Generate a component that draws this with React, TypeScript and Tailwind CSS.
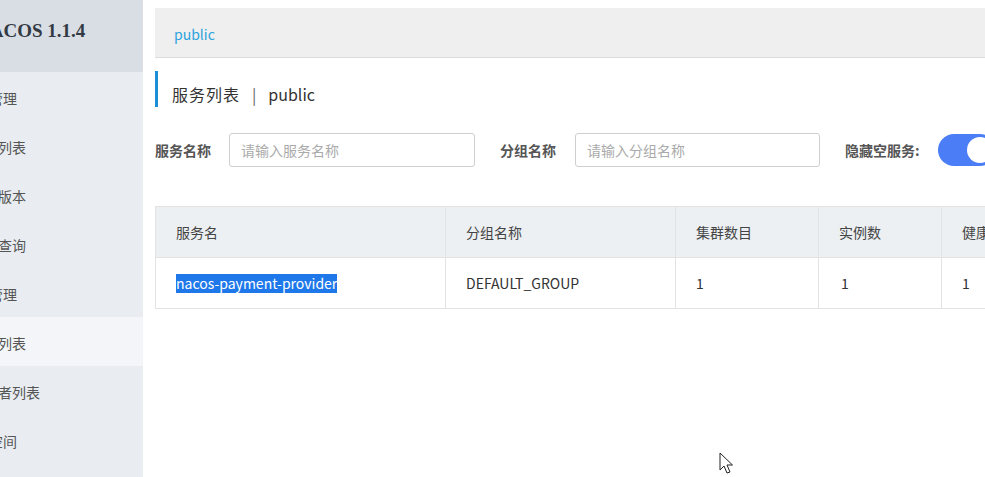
import React from "react";

const sideItems: { text: string; child: boolean; active?: boolean }[] = [
  { text: "配置管理", child: false },
  { text: "配置列表", child: true },
  { text: "历史版本", child: true },
  { text: "监听查询", child: true },
  { text: "服务管理", child: false },
  { text: "服务列表", child: true, active: true },
  { text: "订阅者列表", child: true },
  { text: "命名空间", child: false },
];

const cjk = { fontFamily: '"Noto Sans CJK SC", "Noto Sans", sans-serif' };

export default function App() {
  return (
    <div className="relative flex w-[985px] h-[477px] overflow-hidden bg-white" style={cjk}>
      {/* Sidebar */}
      <div className="w-[143px] shrink-0 bg-[#e9edf2] overflow-hidden">
        <div className="h-[72px] bg-[#d9dee5] flex items-start pt-[17px] overflow-hidden">
          <span
            className="ml-[-24px] whitespace-nowrap text-[19px] font-bold text-[#333a44]"
            style={{ fontFamily: '"Liberation Serif", serif' }}
          >
            NACOS 1.1.4
          </span>
        </div>
        {sideItems.map((it, i) => (
          <div
            key={i}
            className={
              "h-[49px] flex items-center pt-[4px] overflow-hidden text-[14px] text-[#555] whitespace-nowrap " +
              (it.active ? "bg-[#f3f5f8]" : "")
            }
          >
            <span className={it.child ? "ml-[-30px]" : "ml-[-39px]"}>{it.text}</span>
          </div>
        ))}
      </div>

      {/* Main */}
      <div className="flex-1 overflow-hidden pl-[12px] pt-[8px]">
        <div className="w-[1000px]">
          <div className="h-[50px] bg-[#efefef] border-b border-[#dcdcdc] flex items-center pt-[4px] pl-[19px] text-[14px] text-[#2ba3dc]">
            public
          </div>

          <div className="mt-[13px] h-[36px] border-l-[3px] border-[#1a8fd5] pl-[14px] pt-[9px] flex items-center text-[16px] text-[#333]">
            <span className="tracking-[1px]">服务列表</span>
            <span className="mx-[12px] text-[#666]">|</span>
            <span>public</span>
          </div>

          <div className="mt-[26px] h-[34px] flex items-center text-[14px]">
            <span className="w-[74px] font-bold text-[#555]">服务名称</span>
            <div className="w-[246px] h-[34px] border border-[#cfcfcf] rounded-[3px] flex items-center pl-[11px] text-[#aaa]">
              请输入服务名称
            </div>
            <span className="ml-[25px] w-[75px] font-bold text-[#555]">分组名称</span>
            <div className="w-[245px] h-[34px] border border-[#cfcfcf] rounded-[3px] flex items-center pl-[11px] text-[#aaa]">
              请输入分组名称
            </div>
            <span className="ml-[25px] w-[93px] font-bold text-[#555]">隐藏空服务:</span>
            <div className="w-[58px] h-[32px] rounded-full bg-[#4b7ef6] flex items-center justify-end pr-[3px]">
              <div className="w-[26px] h-[26px] rounded-full bg-white" />
            </div>
          </div>

          <div className="mt-[39px] border border-[#e3e3e3] text-[14px] text-[#333]">
            <div className="grid grid-cols-[289px_230px_143px_123px_200px] h-[51px] bg-[#edf0f3] border-b border-[#e3e3e3]">
              {["服务名", "分组名称", "集群数目", "实例数", "健康实例数"].map((h, i) => (
                <div
                  key={i}
                  className={"flex items-center pl-[20px] text-[#444] " + (i > 0 ? "border-l border-[#e3e3e3]" : "")}
                >
                  {h}
                </div>
              ))}
            </div>
            <div className="grid grid-cols-[289px_230px_143px_123px_200px] h-[50px] bg-white">
              <div className="flex items-center pl-[20px]">
                <span className="bg-[#1f78ea] text-white leading-[19px]">nacos-payment-provider</span>
              </div>
              <div className="flex items-center pl-[20px] border-l border-[#e3e3e3]">DEFAULT_GROUP</div>
              <div className="flex items-center pl-[20px] border-l border-[#e3e3e3]">1</div>
              <div className="flex items-center pl-[22px] border-l border-[#e3e3e3]">1</div>
              <div className="flex items-center pl-[20px] border-l border-[#e3e3e3]">1</div>
            </div>
          </div>
        </div>
      </div>

      {/* Mouse cursor */}
      <svg className="absolute left-[719px] top-[452px]" width="16" height="24" viewBox="0 0 16 24">
        <path
          d="M1 1 L1 18 L5 14 L8 21 L11 20 L8 13 L13.5 13 Z"
          fill="white"
          stroke="#222"
          strokeWidth="1"
          strokeLinejoin="round"
        />
      </svg>
    </div>
  );
}
